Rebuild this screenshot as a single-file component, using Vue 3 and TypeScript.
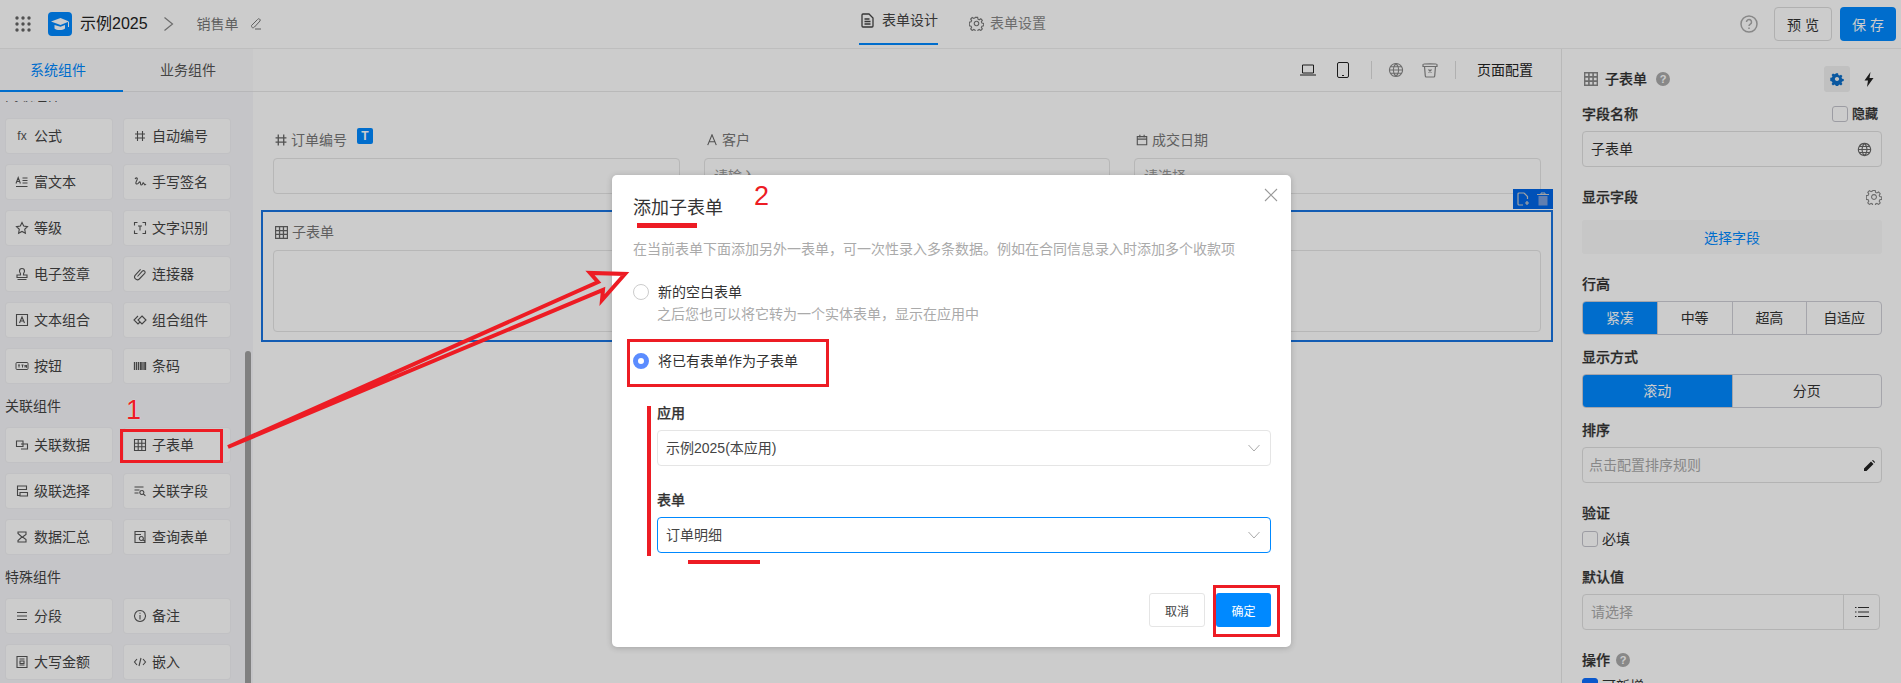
<script setup lang="ts">
interface Item { name: string; d?: string; text?: string; sw?: number }
const grid = 'M1.5 1.5h11v11h-11z M1.5 5.2h11 M1.5 8.8h11 M5.2 1.5v11 M8.8 1.5v11'
const hash = 'M4.5 2V12M9.5 2V12M2 5H12M2 9H12'
const group1: Item[] = [
  { name: '公式', text: 'fx' },
  { name: '自动编号', d: hash },
  { name: '富文本', d: 'M1 8.5 3.2 2.5 5.4 8.5M1.8 6.5H4.6M7.5 3H12.5M7.5 5.5H12.5M7.5 8H12.5M1 11.5H12.5' },
  { name: '手写签名', d: 'M2 4c1.5-2 3-1 2 1s-2 4 0 4 2-3 3-2 0 3 1.5 3 1-3 2-2 1 3 2.5 1' },
  { name: '等级', d: 'M7 1.5l1.7 3.6 3.8.5-2.8 2.7.7 3.9L7 10.4l-3.4 1.8.7-3.9L1.5 5.6l3.8-.5z' },
  { name: '文字识别', d: 'M1.5 4.5V1.5H4.5M9.5 1.5H12.5V4.5M12.5 9.5V12.5H9.5M4.5 12.5H1.5V9.5M5 5h4M7 5v4.5' },
  { name: '电子签章', d: 'M5.5 7c0-1-1-1.6-1-3a2.5 2.5 0 0 1 5 0c0 1.4-1 2-1 3v1H12v2.5H2V8h3.5zM2.5 12.5h9' },
  { name: '连接器', d: 'M4.5 9.5 9.3 4.2a1.6 1.6 0 0 1 2.4 2.2L6.3 12a2.8 2.8 0 0 1-4-3.9L7.6 2.4' },
  { name: '文本组合', d: 'M1.5 1.5h11v11h-11z M4.5 10 7 4l2.5 6 M5.3 8h3.4' },
  { name: '组合组件', d: 'M5 3 1 7l4 4 2-2 M9 3l4 4-4 4-4-4z' },
  { name: '按钮', d: 'M2 3.5h10a1 1 0 0 1 1 1v5a1 1 0 0 1-1 1H2a1 1 0 0 1-1-1v-5a1 1 0 0 1 1-1z M3 6h2M4 6v2.5M6.5 6h2M7.5 6v2.5M10 8.5V6l1.5 2.5V6', sw: 1 },
  { name: '条码', d: 'M1.5 3v8M3.5 3v8M5.5 3v8M7.5 3v8M9 3v8M11 3v8M12.5 3v8', sw: 1.3 },
]
const group2: Item[] = [
  { name: '关联数据', d: 'M1.5 3h6.5v5.5H1.5z M6 6h6.5v5H6' },
  { name: '子表单', d: grid },
  { name: '级联选择', d: 'M2.5 2h9v3.5h-9z M2.5 5.5v6h2.5 M5 8.5h7.5v3.5H5z' },
  { name: '关联字段', d: 'M1.5 3h9M1.5 6h5M1.5 9h4M8.8 6.5a2 2 0 1 0 .1 0M10.4 9.8l2 2' },
  { name: '数据汇总', d: 'M3 2h8v2.5L7.5 7 11 9.5V12H3v-1.5L7 7 3 3.5z' },
  { name: '查询表单', d: 'M2 1.5h10v11H2z M2 4.5h6 M8.3 6.5a2 2 0 1 0 .1 0M10 9.6l2 2' },
]
const group3: Item[] = [
  { name: '分段', d: 'M2 3.5h10M2 7h10M2 10.5h10' },
  { name: '备注', d: 'M7 1.5a5.5 5.5 0 1 0 .01 0z M7 6v4.5 M7 3.8v1' },
  { name: '大写金额', d: 'M2 1.5h10v11H2z M4.5 4h5 M4.5 10h5 M5 6h4v2.5H5z' },
  { name: '嵌入', d: 'M4 4 1.5 7 4 10 M10 4l2.5 3L10 10 M8 3 6 11' },
]
const groups = [
  { title: '高级组件', items: group1, cut: true },
  { title: '关联组件', items: group2, cut: false },
  { title: '特殊组件', items: group3, cut: false },
]
const rowHeights = ['紧凑', '中等', '超高', '自适应']
const globe = 'M8 1.5a6.5 6.5 0 1 0 .01 0z M1.5 8h13 M2.5 4.8h11 M2.5 11.2h11 M8 1.5c-3.6 3.5-3.6 9.5 0 13 M8 1.5c3.6 3.5 3.6 9.5 0 13'
const gear = 'M6.8 1.5h2.4l.4 1.9 1.3.6 1.7-1 1.6 1.7-1 1.6.6 1.3 1.9.4v2.4l-1.9.4-.6 1.3 1 1.7-1.6 1.6-1.7-1-1.3.6-.4 1.9H6.8l-.4-1.9-1.3-.6-1.7 1-1.6-1.6 1-1.7-.6-1.3-1.9-.4V6.6l1.9-.4.6-1.3-1-1.6 1.6-1.7 1.7 1 1.3-.6z M8 5.6a2.4 2.4 0 1 0 .01 0z'
</script>

<template>
  <div class="app">
    <header class="top">
      <div class="brand">
        <svg class="apps" width="16" height="16" viewBox="0 0 16 16"><g fill="#666"><circle cx="2" cy="2" r="1.7"/><circle cx="8" cy="2" r="1.7"/><circle cx="14" cy="2" r="1.7"/><circle cx="2" cy="8" r="1.7"/><circle cx="8" cy="8" r="1.7"/><circle cx="14" cy="8" r="1.7"/><circle cx="2" cy="14" r="1.7"/><circle cx="8" cy="14" r="1.7"/><circle cx="14" cy="14" r="1.7"/></g></svg>
        <span class="logo">
          <svg width="24" height="24" viewBox="0 0 24 24"><path fill="#fff" d="M3 9.5 12.5 6 21 9.5l-8.5 3.5z"/><path fill="#fff" d="M6.5 13v3.5c2 2 8 2 10.5 0V13l-4.500 1.800z"/><path fill="none" stroke="#fff" d="M20.500 10v5"/></svg>
        </span>
        <span class="app-name">示例2025</span>
        <svg class="crumb" width="11" height="16" viewBox="0 0 11 16"><path d="M1.500 1.500 9.500 8 1.500 14.500" fill="none" stroke="#888" stroke-width="1.200"/></svg>
        <span class="form-name">销售单</span>
        <svg width="12" height="12" viewBox="0 0 12 12"><path d="M1.500 7.500 7.500 1.500a1.400 1.400 0 0 1 2.500 1.500L4.500 9c-1 1-3 1.500-3-1.500zM5 11h6" fill="none" stroke="#777"/></svg>
      </div>
      <nav class="top-tabs">
        <span class="top-tab on">
          <svg width="13" height="15" viewBox="0 0 13 15"><path d="M1 2a1 1 0 0 1 1-1h6l4 4v8a1 1 0 0 1-1 1H2a1 1 0 0 1-1-1zM3.500 6h5M3.500 8.500h6M3.500 11h6" fill="none" stroke="#444" stroke-width="1.300"/></svg>
          表单设计
        </span>
        <span class="top-tab set">
          <svg width="15" height="15" viewBox="0 0 16 16"><path :d="gear" fill="none" stroke="#777" stroke-width="1.200"/></svg>
          表单设置
        </span>
      </nav>
      <div class="top-actions">
        <svg width="18" height="18" viewBox="0 0 18 18"><circle cx="9" cy="9" r="8" fill="none" stroke="#aaa" stroke-width="1.500"/><path d="M6.500 7a2.500 2.500 0 1 1 3.800 2.100c-.9.600-1.300 1-1.300 2M9 12.500v1.500" fill="none" stroke="#aaa" stroke-width="1.500"/></svg>
        <button class="btn-preview">预 览</button>
        <button class="btn-save">保 存</button>
      </div>
    </header>

    <main class="body">
      <aside class="side">
        <div class="side-tabs">
          <span class="side-tab on">系统组件</span>
          <span class="side-tab">业务组件</span>
        </div>
        <div class="side-list">
          <template v-for="g in groups" :key="g.title">
            <div class="group-title" :class="{ cut: g.cut }">{{ g.title }}</div>
            <div class="items">
              <div v-for="it in g.items" :key="it.name" class="item">
                <span v-if="it.text" class="item-fx">{{ it.text }}</span>
                <svg v-else width="14" height="14" viewBox="0 0 14 14"><path :d="it.d" fill="none" stroke="#555" :stroke-width="it.sw || 1.1"/></svg>
                <span>{{ it.name }}</span>
              </div>
            </div>
          </template>
        </div>
        <div class="side-scroll"></div>
      </aside>

      <section class="canvas">
        <div class="tools">
          <svg width="16" height="14" viewBox="0 0 16 14"><path d="M2.500 2h11v8h-11zM0 12h16" fill="none" stroke="#222"/></svg>
          <svg class="t-phone" width="12" height="16" viewBox="0 0 12 16"><rect x=".5" y=".5" width="11" height="15" rx="1.500" fill="none" stroke="#222"/><path d="M5 13.500h2" stroke="#222"/></svg>
          <i class="t-div"></i>
          <svg width="16" height="16" viewBox="0 0 16 16"><path :d="globe" fill="none" stroke="#888" stroke-width="1.100"/></svg>
          <svg class="t-bin" width="16" height="16" viewBox="0 0 16 16"><path d="M1 2.500c0-1 14-1 14 0v2H1zM2.500 4.500l.8 9.500a1 1 0 0 0 1 1h7.400a1 1 0 0 0 1-1l.8-9.500M6.500 7.500l3 3M9.500 7.500l-3 3" fill="none" stroke="#888" stroke-width="1.200"/></svg>
          <i class="t-div d2"></i>
          <span class="t-page">页面配置</span>
        </div>
        <div class="fields">
          <div class="field">
            <div class="f-label">
              <svg width="12" height="12" viewBox="1.500 1.500 11 11"><path :d="hash" fill="none" stroke="#666" stroke-width="1.200"/></svg>
              订单编号
              <span class="t-badge">T</span>
            </div>
            <div class="f-input"></div>
          </div>
          <div class="field">
            <div class="f-label">
              <svg width="12" height="12" viewBox="0 0 14 14"><path d="M2 13 7 1l5 12M3.800 9h6.400" fill="none" stroke="#666" stroke-width="1.300"/></svg>
              客户
            </div>
            <div class="f-input ph">请输入</div>
          </div>
          <div class="field">
            <div class="f-label">
              <svg width="12" height="12" viewBox="0 0 14 14"><path d="M1.500 3h11v9.500h-11zM1.500 6h11M4.500 1v3M9.500 1v3" fill="none" stroke="#666" stroke-width="1.300"/></svg>
              成交日期
            </div>
            <div class="f-input ph">请选择</div>
          </div>
        </div>
        <div class="picked">
          <div class="picked-tools">
            <svg width="14" height="14" viewBox="0 0 14 14"><path d="M8 1H3a1 1 0 0 0-1 1v10a1 1 0 0 0 1 1h4M8 1l3.500 3.500V7M11 9v4M9 11h4" fill="none" stroke="#ccc" stroke-width="1.200"/></svg>
            <svg width="14" height="14" viewBox="0 0 14 14"><path d="M1 2.500h12M5 2.500V1h4v1.500" fill="none" stroke="#ccc"/><path d="M2.500 4h9v9.500h-9z" fill="#7a9fdd"/></svg>
          </div>
          <div class="f-label">
            <svg width="13" height="13" viewBox="1 1 12 12"><path :d="grid" fill="none" stroke="#666" stroke-width="1.200"/></svg>
            子表单
          </div>
          <div class="f-table"></div>
        </div>
      </section>

      <aside class="panel">
        <div class="p-head">
          <svg width="14" height="14" viewBox="1 1 12 12"><path :d="grid" fill="none" stroke="#888" stroke-width="1.400"/></svg>
          <span class="p-name">子表单</span>
          <span class="q">?</span>
          <span class="p-gear">
            <svg width="14" height="14" viewBox="0 0 16 16"><path :d="gear" fill="#0d6fc9" fill-rule="evenodd"/></svg>
          </span>
          <svg class="p-bolt" width="10" height="15" viewBox="0 0 10 15"><path d="M6.500 0 .5 8.500h3.500L3 15l6.500-9H5.500z" fill="#222"/></svg>
        </div>
        <div class="p-label m12 between">
          <span>字段名称</span>
          <span class="check-wrap"><i class="check"></i><span>隐藏</span></span>
        </div>
        <div class="p-input m7 between">
          <span>子表单</span>
          <svg width="15" height="15" viewBox="0 0 16 16"><path :d="globe" fill="none" stroke="#666" stroke-width="1.200"/></svg>
        </div>
        <div class="p-label m20 between">
          <span>显示字段</span>
          <svg width="16" height="16" viewBox="0 0 16 16"><path :d="gear" fill="none" stroke="#888" stroke-width="1.100"/></svg>
        </div>
        <button class="pick-btn">选择字段</button>
        <div class="p-label m20">行高</div>
        <div class="seg m7">
          <span v-for="(r, i) in rowHeights" :key="r" class="seg-item" :class="{ on: i === 0 }">{{ r }}</span>
        </div>
        <div class="p-label m12">显示方式</div>
        <div class="seg m7">
          <span class="seg-item on">滚动</span>
          <span class="seg-item">分页</span>
        </div>
        <div class="p-label m12">排序</div>
        <div class="p-input m7 between muted">
          <span>点击配置排序规则</span>
          <svg width="11" height="11" viewBox="0 0 11 11"><path d="M0 11V8.500L7 1.500 9.500 4 2.500 11zM8 .5 9 0l2 2-.5 1z" fill="#222"/></svg>
        </div>
        <div class="p-label m20">验证</div>
        <div class="p-check"><i class="check"></i><span>必填</span></div>
        <div class="p-label m18">默认值</div>
        <div class="p-input m7 combo muted">
          <span class="combo-text">请选择</span>
          <span class="combo-btn">
            <svg width="14" height="12" viewBox="0 0 14 12"><path d="M3 1.500h11M3 6h11M3 10.500h11" stroke="#333"/><path d="M0 1.500h1.500M0 6h1.500M0 10.500h1.500" stroke="#333"/></svg>
          </span>
        </div>
        <div class="p-label m20"><span>操作</span><span class="q q2">?</span></div>
        <div class="p-check m7"><i class="check checked"></i><span>可新增</span></div>
      </aside>
    </main>

    <div class="mask"></div>

    <div class="dialog">
      <div class="d-title">添加子表单</div>
      <svg class="d-close" width="14" height="14" viewBox="0 0 14 14"><path d="M1 1l12 12M13 1 1 13" stroke="#999" stroke-width="1.100"/></svg>
      <div class="d-desc">在当前表单下面添加另外一表单，可一次性录入多条数据。例如在合同信息录入时添加多个收款项</div>
      <label class="d-radio r1"><i class="radio"></i><span>新的空白表单</span></label>
      <div class="d-sub">之后您也可以将它转为一个实体表单，显示在应用中</div>
      <label class="d-radio r2"><i class="radio on"></i><span>将已有表单作为子表单</span></label>
      <div class="d-group">
        <div class="d-label">应用</div>
        <div class="d-select">
          <span>示例2025(本应用)</span>
          <svg width="12" height="8" viewBox="0 0 12 8"><path d="M.5 1 6 7l5.500-6" fill="none" stroke="#aaa"/></svg>
        </div>
        <div class="d-label l2">表单</div>
        <div class="d-select focus">
          <span>订单明细</span>
          <svg width="12" height="8" viewBox="0 0 12 8"><path d="M.5 1 6 7l5.500-6" fill="none" stroke="#aaa"/></svg>
        </div>
      </div>
      <div class="d-foot">
        <button class="d-cancel">取消</button>
        <button class="d-ok">确定</button>
      </div>
    </div>

    <svg class="arrow" width="1901" height="683" viewBox="0 0 1901 683">
      <path d="M228 447 598 282 590 273 625 274 602 300 603 290 228 447z" fill="none" stroke="#ed1c24" stroke-width="4" stroke-linejoin="miter"/>
    </svg>
    <div class="mark num n1">1</div>
    <div class="mark num n2">2</div>
    <div class="mark box b-item"></div>
    <div class="mark box b-radio"></div>
    <div class="mark box b-ok"></div>
    <div class="mark bar u-title"></div>
    <div class="mark bar v-group"></div>
    <div class="mark bar u-select"></div>
  </div>
</template>

<style>
html, body { margin: 0; padding: 0; background: #fff; }
</style>

<style scoped>
.app {
  position: relative; width: 1901px; height: 683px; overflow: hidden; background: #fff;
  font-family: "Liberation Sans", "Noto Sans CJK SC", sans-serif; font-size: 14px; line-height: 20px; color: #333;
}
svg { display: block; flex: none; }
button { font-family: inherit; cursor: pointer; padding: 0; }

.top { height: 48px; border-bottom: 1px solid #eee; display: flex; align-items: center; }
.brand { width: 859px; display: flex; align-items: center; padding-left: 15px; box-sizing: border-box; }
.logo { width: 24px; height: 24px; margin-left: 17px; background: #0089ff; border-radius: 4px; }
.app-name { margin-left: 8px; font-size: 16px; color: #222; }
.crumb { margin-left: 15px; }
.form-name { margin-left: 23px; color: #777; }
.form-name + svg { margin-left: 11px; }
.top-tabs { display: flex; height: 48px; gap: 31px; }
.top-tab { display: flex; align-items: center; gap: 6px; height: 45px; box-sizing: border-box; padding-top: 1px; color: #888; }
.top-tab.on { color: #444; border-bottom: 2px solid #0089ff; padding: 0 0 3px 2px; gap: 8px; }
.top-actions { margin-left: auto; display: flex; align-items: center; padding-right: 5px; }
.btn-preview { width: 58px; height: 34px; margin-left: 16px; background: #fff; border: 1px solid #dcdcdc; border-radius: 4px; color: #333; font-size: 14px; }
.btn-save { width: 56px; height: 34px; margin-left: 8px; background: #0089ff; border: 0; border-radius: 4px; color: #fff; font-size: 14px; }

.body { display: flex; height: 634px; overflow: hidden; }

.side { position: relative; width: 253px; flex: none; background: #f7f7fa; }
.side-tabs { height: 43px; display: flex; background: #fbfbfc; box-sizing: border-box; border-bottom: 1px solid #e5e5e8; }
.side-tab { width: 130px; text-align: center; line-height: 42px; color: #555; }
.side-tab.on { width: 123px; padding-right: 7px; box-sizing: border-box; color: #0089ff; height: 43px; border-bottom: 2px solid #0089ff; line-height: 42px; }
.side-list { margin-top: 9px; height: 582px; overflow: hidden; padding: 0 6px; }
.group-title { height: 20px; margin: 13px 0 12px -1px; color: #444; }
.group-title.cut { margin-top: -16px; margin-bottom: 14px; }
.items { display: grid; grid-template-columns: 106px 106px; gap: 12px; }
.item {
  height: 34px; background: #fff; border-radius: 3px; display: flex; align-items: center; gap: 5px;
  padding-left: 9px; box-sizing: border-box; color: #444; box-shadow: 0 0 0 1px #f2f2f5;
}
.item-fx { width: 14px; font-size: 12px; color: #555; text-align: center; flex: none; }
.side-scroll { position: absolute; left: 245px; top: 302px; bottom: 0; width: 6px; background: #a0a0a0; border-radius: 3px 3px 0 0; }

.canvas { flex: 1; min-width: 0; background: #fff; }
.tools { height: 42px; border-bottom: 1px solid #e8e8e8; display: flex; align-items: center; padding-left: 1047px; }
.t-phone { margin-left: 21px; }
.t-div { width: 1px; height: 18px; background: #ddd; margin: 0 16px 0 22px; }
.t-bin { margin-left: 18px; }
.t-div.d2 { margin: 0 21px 0 17px; }
.t-page { color: #222; }
.fields { display: grid; grid-template-columns: 407px 406px 407px; column-gap: 24px; padding: 38px 0 0 20px; }
.f-label { display: flex; align-items: center; gap: 4px; height: 20px; color: #777; margin-left: 2px; }
.t-badge { width: 16px; height: 16px; margin: -8px 0 0 6px; background: #0089ff; border-radius: 2px; color: #fff; font-size: 12px; font-weight: 700; line-height: 16px; text-align: center; }
.f-input { height: 36px; margin-top: 8px; box-sizing: border-box; border: 1px solid #e5e5e5; border-radius: 4px; padding: 7px 9px; color: #999; line-height: 20px; overflow: hidden; }
.picked { position: relative; width: 1292px; height: 132px; box-sizing: border-box; margin: 16px 0 0 8px; border: 2px solid #1873e0; padding: 10px; }
.picked-tools { position: absolute; top: -23px; right: -2px; width: 40px; height: 20px; background: #0066e6; display: flex; align-items: center; justify-content: center; gap: 6px; }
.f-table { height: 82px; margin-top: 8px; box-sizing: border-box; border: 1px solid #e5e5e5; border-radius: 4px; }

.panel { width: 340px; flex: none; box-sizing: border-box; border-left: 1px solid #e8e8e8; padding: 17px 19px 0 20px; overflow: hidden; background: #fff; }
.p-head { height: 26px; display: flex; align-items: center; padding-left: 2px; }
.p-name { margin-left: 7px; font-weight: 500; color: #333; -webkit-text-stroke: .2px #333; }
.q { width: 14px; height: 14px; border-radius: 50%; background: #aaa; color: #fff; font-size: 11px; line-height: 14px; text-align: center; font-weight: 700; margin-left: 9px; display: inline-block; }
.p-gear { margin-left: auto; width: 26px; height: 26px; border-radius: 3px; background: #f0f0f0; display: flex; align-items: center; justify-content: center; }
.p-bolt { margin: 0 8px 0 14px; }
.p-label { height: 20px; color: #333; font-weight: 500; -webkit-text-stroke: .25px #333; display: flex; align-items: center; }
.between { display: flex; align-items: center; justify-content: space-between; }
.m7 { margin-top: 7px; } .m12 { margin-top: 12px; } .m18 { margin-top: 18px; } .m20 { margin-top: 20px; }
.check-wrap { display: flex; align-items: center; gap: 4px; font-size: 13px; padding-right: 4px; }
.check { width: 16px; height: 16px; box-sizing: border-box; border: 1px solid #c4c4cc; border-radius: 3px; background: #fff; display: block; flex: none; }
.check.checked { background: #0d6fff; border-color: #0d6fff; }
.p-input { height: 36px; box-sizing: border-box; border: 1px solid #e0e0e0; border-radius: 4px; padding: 0 9px 0 8px; color: #333; }
.muted { color: #aaa; padding: 0 6px; }
.pick-btn { display: block; width: 300px; height: 34px; margin-top: 13px; border: 0; border-radius: 3px; background: #f9f9f9; color: #0089ff; font-size: 14px; }
.seg { display: flex; height: 34px; box-sizing: border-box; border: 1px solid #cfcfd6; border-radius: 4px; overflow: hidden; }
.seg-item { flex: 1; text-align: center; line-height: 32px; color: #333; border-left: 1px solid #cfcfd6; }
.seg-item:first-child { border-left: 0; }
.seg-item.on { background: #0089ff; color: #fff; }
.p-check { display: flex; align-items: center; gap: 4px; height: 20px; margin-top: 6px; color: #333; }
.combo { display: flex; align-items: center; width: 298px; padding: 0; }
.combo-text { flex: 1; padding-left: 8px; }
.combo-btn { width: 35px; height: 100%; border-left: 1px solid #e0e0e0; display: flex; align-items: center; justify-content: center; }
.q2 { margin-left: 6px; -webkit-text-stroke: 0; }

.mask { position: absolute; inset: 0; background: rgba(0, 0, 0, .2); }

.dialog {
  position: absolute; left: 612px; top: 175px; width: 679px; height: 472px; box-sizing: border-box;
  background: #fff; border-radius: 5px; padding: 21px 20px 0 21px; box-shadow: 0 1px 6px rgba(0, 0, 0, .2);
}
.d-title { font-size: 18px; line-height: 24px; color: #333; }
.d-close { position: absolute; right: 13px; top: 13px; }
.d-desc { margin-top: 19px; color: #aaa; white-space: nowrap; }
.d-radio { display: flex; align-items: center; gap: 9px; height: 20px; color: #333; }
.r1 { margin-top: 23px; }
.r2 { margin-top: 27px; }
.radio { width: 16px; height: 16px; box-sizing: border-box; border-radius: 50%; border: 1px solid #ccc; background: #fff; display: block; flex: none; }
.radio.on { border: 5px solid #5b8cff; }
.d-sub { margin: 2px 0 0 24px; color: #aaa; }
.d-group { margin: 32px 0 0 24px; }
.d-label { color: #333; font-weight: 500; -webkit-text-stroke: .25px #333; }
.l2 { margin-top: 24px; }
.d-select { height: 36px; margin-top: 7px; box-sizing: border-box; border: 1px solid #e5e5e5; border-radius: 4px; padding: 0 10px 0 8px; display: flex; align-items: center; justify-content: space-between; color: #444; }
.d-select.focus { border-color: #0089ff; }
.d-foot { display: flex; justify-content: flex-end; gap: 11px; margin-top: 40px; }
.d-cancel, .d-ok { width: 55px; height: 34px; border-radius: 3px; font-size: 12px; }
.d-cancel { width: 56px; background: #fff; border: 1px solid #e5e5e5; color: #444; }
.d-ok { background: #0089ff; border: 0; color: #fff; }

.arrow { position: absolute; left: 0; top: 0; pointer-events: none; }
.mark { position: absolute; }
.num { color: #ed1c24; font-size: 27px; line-height: 27px; text-shadow: 0 0 1px #fff; }
.n1 { left: 126px; top: 397px; }
.n2 { left: 754px; top: 183px; }
.box { box-sizing: border-box; border: 3px solid #ed1c24; }
.b-item { left: 120px; top: 429px; width: 103px; height: 34px; }
.b-radio { left: 627px; top: 339px; width: 202px; height: 48px; }
.b-ok { left: 1213px; top: 585px; width: 67px; height: 52px; }
.bar { background: #ed1c24; }
.u-title { left: 637px; top: 223px; width: 60px; height: 5px; }
.v-group { left: 647px; top: 406px; width: 4px; height: 150px; }
.u-select { left: 688px; top: 560px; width: 72px; height: 4px; }
</style>
